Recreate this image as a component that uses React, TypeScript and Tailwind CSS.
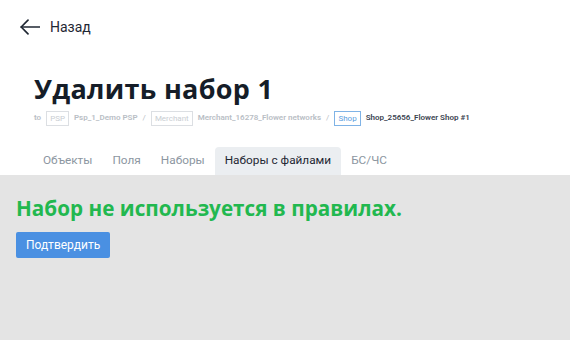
const tabs = ['Объекты', 'Поля', 'Наборы', 'Наборы с файлами', 'БС/ЧС'];
const activeTab = 'Наборы с файлами';

const Crumb = ({ label, value, active }: { label: string; value: string; active?: boolean }) => (
  <div className="flex items-center gap-[5px]">
    <span
      className={
        active
          ? 'border border-[#7fb3e6] text-[#5b9ee0] px-[3px] leading-[13px]'
          : 'border border-[#dcdfe3] text-[#c9cdd2] px-[3px] leading-[13px]'
      }
    >
      {label}
    </span>
    <span className={active ? 'text-[#3a4350] font-semibold' : 'text-[#b9bec5] font-semibold'}>{value}</span>
  </div>
);

const App = () => {
  return (
    <div className="w-[570px] h-[340px] flex flex-col bg-white font-['Roboto',sans-serif] overflow-hidden">
      <div className="flex items-center gap-[10px] pl-[20px] pt-[17px] h-[37px] text-[#1f2733]">
        <svg width="20" height="16" viewBox="0 0 20 16" fill="none" stroke="currentColor" strokeWidth="1.7" strokeLinecap="round" strokeLinejoin="round">
          <path d="M19.5 8H1.2" />
          <path d="M8 1.2L1.2 8L8 14.8" />
        </svg>
        <span className="text-[14px]">Назад</span>
      </div>

      <div className="pl-[34px] pt-[36px]">
        <h1 className="font-['Open_Sans',sans-serif] font-bold text-[27px] leading-[32px] text-[#151d28] tracking-[0.3px]">
          Удалить набор 1
        </h1>
        <div className="flex items-center gap-[5px] mt-[6px] text-[8px] h-[14px]">
          <span className="text-[#b9bec5] font-semibold">to</span>
          <Crumb label="PSP" value="Psp_1_Demo PSP" />
          <span className="text-[#b9bec5]">/</span>
          <Crumb label="Merchant" value="Merchant_16278_Flower networks" />
          <span className="text-[#b9bec5]">/</span>
          <Crumb label="Shop" value="Shop_25656_Flower Shop #1" active />
        </div>
      </div>

      <div className="flex pl-[33px] mt-[22px] h-[28px]">
        {tabs.map((t) => (
          <div
            key={t}
            className={
              t === activeTab
                ? 'px-[10px] flex items-center rounded-t-[4px] bg-[#ebeef1] text-[#1f2733] text-[11.8px]'
                : 'px-[10px] flex items-center text-[#8c96a1] text-[11.8px]'
            }
          >
            {t}
          </div>
        ))}
      </div>

      <div className="flex-1 bg-[#e4e4e4] px-[16px] pt-[20px]">
        <div className="font-['Open_Sans',sans-serif] font-bold text-[20.7px] leading-[26px] text-[#22b84f]">
          Набор не используется в правилах.
        </div>
        <button className="mt-[11px] h-[26px] px-[10px] rounded-[2px] bg-[#4a90e2] text-white text-[12px]">
          Подтвердить
        </button>
      </div>
    </div>
  );
};

export default App;
